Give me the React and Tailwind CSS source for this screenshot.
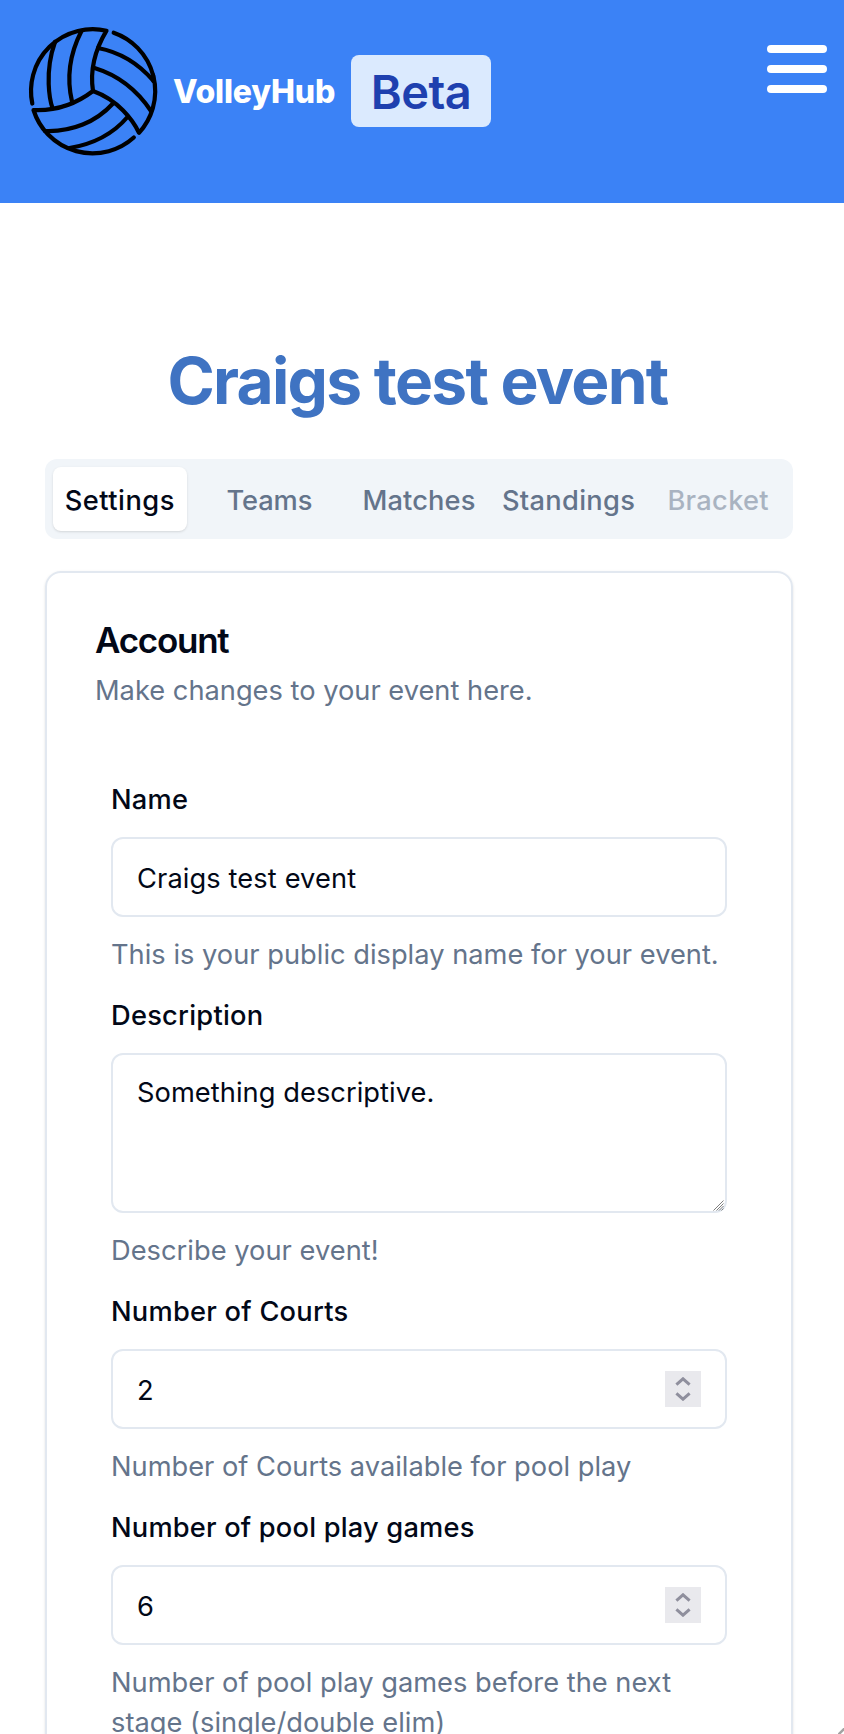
const tabs = [
  { label: "Settings", cls: "bg-white text-[#020817] shadow-sm tracking-[0.018em]" },
  { label: "Teams", cls: "text-[#64748b] tracking-[-0.003em]" },
  { label: "Matches", cls: "text-[#64748b] tracking-[0.0055em]" },
  { label: "Standings", cls: "text-[#64748b] tracking-[0.011em]" },
  { label: "Bracket", cls: "text-[#64748b] opacity-50 tracking-[0.011em]" },
];

function VolleyballLogo() {
  return (
    <svg
      className="size-32 shrink-0 overflow-visible"
      viewBox="0 0 128 128"
      fill="none"
      stroke="#000"
      strokeWidth="4.2"
      strokeLinecap="round"
      strokeLinejoin="round"
    >
      <path d="M3.300 76.500A61.800 61.800 0 0 1 77.500 3.700C63 28 61.500 48 64 64C47 77 26 84 4.500 83A61.800 61.800 0 0 0 104.800 110.500" />
      <path d="M84.700 5.700A61.800 61.800 0 0 1 110 105.800C104 93 89 73 64 64" />
      <path d="M26 15C15 46 21 74 23.500 81" />
      <path d="M52.500 4C35 38 41 66 43 74.500" />
      <path d="M69 21C90 25 110 37 124.500 54" />
      <path d="M65.500 41C95 50 112 69 122 84" />
      <path d="M124 48L124.500 54" />
      <path d="M16 104C43 105 67 95 84 76.500" />
      <path d="M40.500 121C65 117 84 107 98.500 90" />
    </svg>
  );
}

function Spinner() {
  return (
    <div className="flex size-9 items-center justify-center bg-[#e9e9ed]">
      <svg className="h-6 w-4" viewBox="0 0 16 24" fill="none" stroke="#8f8f9d" strokeWidth="3">
        <path d="M1.400 7.600L8 1.800L14.600 7.600" />
        <path d="M1.400 16.400L8 22.200L14.600 16.400" />
      </svg>
    </div>
  );
}

function ResizeGrip() {
  return (
    <svg className="size-[11px] self-end" viewBox="0 0 11 11" fill="none" stroke="#707070" strokeWidth="0.9">
      <path d="M0.500 10.500L10.500 0.500" />
      <path d="M3.500 10.500L10.500 3.500" />
      <path d="M6 10.500L10.500 6" />
      <path d="M8.500 10.500L10.500 8.500" />
    </svg>
  );
}

function Field({ label, labelClass, hint, hintClass, children }) {
  return (
    <div>
      <div className={`h-12 pt-[3px] text-[27.25px] leading-[48px] font-medium ${labelClass}`}>{label}</div>
      <div className="mt-4">{children}</div>
      <p className={`mt-[18px] mb-[14px] text-[27.25px] leading-10 text-[#64748b] ${hintClass}`}>{hint}</p>
    </div>
  );
}

function InputBox({ value, children }) {
  return (
    <div className="flex h-20 items-center justify-between rounded-xl border-2 border-slate-200 px-6 text-[27.25px] tracking-[0.004em]">
      <span className="pt-1">{value}</span>
      {children}
    </div>
  );
}

export default function App() {
  return (
    <div className="relative h-[1734px] w-full overflow-hidden bg-white font-['Inter',sans-serif] text-[#020817]">
      <header className="flex h-[203px] items-start justify-between bg-[#3b82f6] pt-[27px] pr-[17px] pl-[29px]">
        <div className="flex h-32 items-center">
          <VolleyballLogo />
          <span className="ml-4 w-[162px] pt-[2px] text-[32px] font-extrabold tracking-[-0.005em] text-white">
            VolleyHub
          </span>
          <span className="ml-4 flex h-[72px] w-[140px] items-center justify-center rounded-lg bg-[#dbeafe] pt-[2px] text-[47px] leading-[48px] font-semibold tracking-[-0.01em] text-[#1e40af]">
            Beta
          </span>
        </div>
        <div className="mt-[18px] flex w-[60px] flex-col gap-3">
          <div className="h-2 rounded-full bg-white" />
          <div className="h-2 rounded-full bg-white" />
          <div className="h-2 rounded-full bg-white" />
        </div>
      </header>

      <main className="pr-[51px] pl-[45px]">
        <h1 className="h-[256px] pt-[142px] pr-[3px] text-center text-[64px] leading-[72px] font-bold tracking-[-0.027em] text-[#3f73c2]">
          Craigs test event
        </h1>

        <div className="grid h-20 grid-cols-5 gap-4 rounded-xl bg-[#f1f5f9] p-2">
          {tabs.map((t) => (
            <div
              key={t.label}
              className={`flex items-center justify-center rounded-lg pt-1 text-[27.25px] font-medium ${t.cls}`}
            >
              {t.label}
            </div>
          ))}
        </div>

        <section className="mt-8 h-[1300px] rounded-2xl border-2 border-slate-200 px-12 pt-[47px] shadow-sm">
          <h2 className="text-[35px] leading-10 font-semibold tracking-[-0.036em]">Account</h2>
          <p className="mt-[11px] text-[27.25px] leading-10 text-[#64748b]">Make changes to your event here.</p>

          <div className="px-4 pt-[62px]">
            <Field
              label="Name"
              labelClass="tracking-[0.008em]"
              hint="This is your public display name for your event."
              hintClass="tracking-[0.0003em]"
            >
              <InputBox value="Craigs test event" />
            </Field>
            <Field
              label="Description"
              labelClass="tracking-[0.009em]"
              hint="Describe your event!"
              hintClass="tracking-[0.001em]"
            >
              <div className="flex h-40 justify-between rounded-xl border-2 border-slate-200 pr-px pl-6 text-[27.25px] leading-10 tracking-[0.002em]">
                <span className="pt-[18px]">Something descriptive.</span>
                <ResizeGrip />
              </div>
            </Field>
            <Field
              label="Number of Courts"
              labelClass="tracking-[0.009em]"
              hint="Number of Courts available for pool play"
              hintClass="tracking-[0em]"
            >
              <InputBox value="2">
                <Spinner />
              </InputBox>
            </Field>
            <Field
              label="Number of pool play games"
              labelClass="tracking-[0.007em]"
              hint="Number of pool play games before the next stage (single/double elim)"
              hintClass="tracking-[0.0005em]"
            >
              <InputBox value="6">
                <Spinner />
              </InputBox>
            </Field>
          </div>
        </section>
      </main>

      <svg className="absolute right-0 bottom-0 size-[6px]" viewBox="0 0 6 6" stroke="#a3a3a3" strokeWidth="2.500">
        <path d="M0 7L7 0" />
      </svg>
    </div>
  );
}
